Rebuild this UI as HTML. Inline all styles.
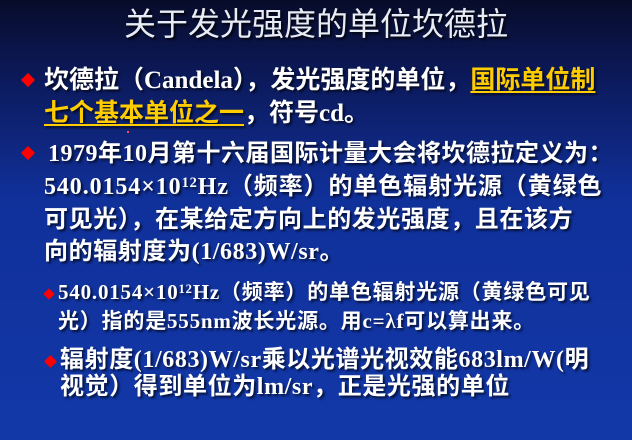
<!DOCTYPE html>
<html><head><meta charset="utf-8"><style>
html,body{margin:0;padding:0}
body{width:632px;height:440px;overflow:hidden;position:relative;
background:linear-gradient(180deg,#080c2a 0%,#0c1a5c 18%,#10309a 45%,#1238a8 100%);
font-family:"Liberation Serif","Noto Sans CJK SC",serif;color:#fff}
.t{position:absolute;white-space:nowrap;font-weight:bold;text-shadow:2px 2px 2px #000a;}
.title{position:absolute;left:0;width:632px;text-align:center;top:5px;font-size:32px;line-height:38px;color:#e8ecf4;font-family:"Liberation Sans","Noto Sans CJK SC",sans-serif;text-shadow:2px 2px 2px #000c}
.d{position:absolute;width:10px;height:10px;background:#f00;transform:rotate(45deg);}
.y{color:#ffcc00;text-decoration:underline;text-decoration-thickness:2px;text-underline-offset:3px}
sup{font-size:60%;vertical-align:0;position:relative;top:-0.5em}
</style></head><body>
<div class="title">关于发光强度的单位坎德拉</div>

<div class="d" style="left:23px;top:75px"></div>
<div class="t" style="left:44px;top:66px;font-size:25px;line-height:30px;letter-spacing:0px">坎德拉（Candela），发光强度的单位，<span class="y">国际单位制</span></div>
<div class="t" style="left:44px;top:99px;font-size:25px;line-height:30px;letter-spacing:0px"><span class="y">七个基本单位之一</span>，符号cd。</div>
<div style="position:absolute;left:127px;top:131px;width:2px;height:2px;background:#f46"></div>

<div class="d" style="left:23px;top:148px"></div>
<div class="t" style="left:48px;top:139px;font-size:24px;line-height:30px;letter-spacing:0.5px">1979年10月第十六届国际计量大会将坎德拉定义为：</div>
<div class="t" style="left:44px;top:172px;font-size:24px;line-height:30px;letter-spacing:0.9px">540.0154×10<sup>12</sup>Hz（频率）的单色辐射光源（黄绿色</div>
<div class="t" style="left:44px;top:205px;font-size:24px;line-height:30px;letter-spacing:0.6px">可见光），在某给定方向上的发光强度，且在该方</div>
<div class="t" style="left:44px;top:237px;font-size:24px;line-height:30px;letter-spacing:0.6px">向的辐射度为(1/683)W/sr。</div>

<div class="d" style="left:45px;top:290px;width:8px;height:8px"></div>
<div class="t" style="left:58px;top:279px;font-size:21px;line-height:26px;letter-spacing:0.8px">540.0154×10<sup>12</sup>Hz（频率）的单色辐射光源（黄绿色可见</div>
<div class="t" style="left:58px;top:308px;font-size:21px;line-height:26px;letter-spacing:0.8px">光）指的是555nm波长光源。用c=λf可以算出来。</div>

<div class="d" style="left:46px;top:357px;width:9px;height:9px"></div>
<div class="t" style="left:60px;top:345px;font-size:24px;line-height:30px;letter-spacing:0.6px">辐射度(1/683)W/sr乘以光谱光视效能683lm/W(明</div>
<div class="t" style="left:60px;top:372px;font-size:24px;line-height:30px;letter-spacing:0.6px">视觉）得到单位为lm/sr，正是光强的单位</div>
</body></html>
